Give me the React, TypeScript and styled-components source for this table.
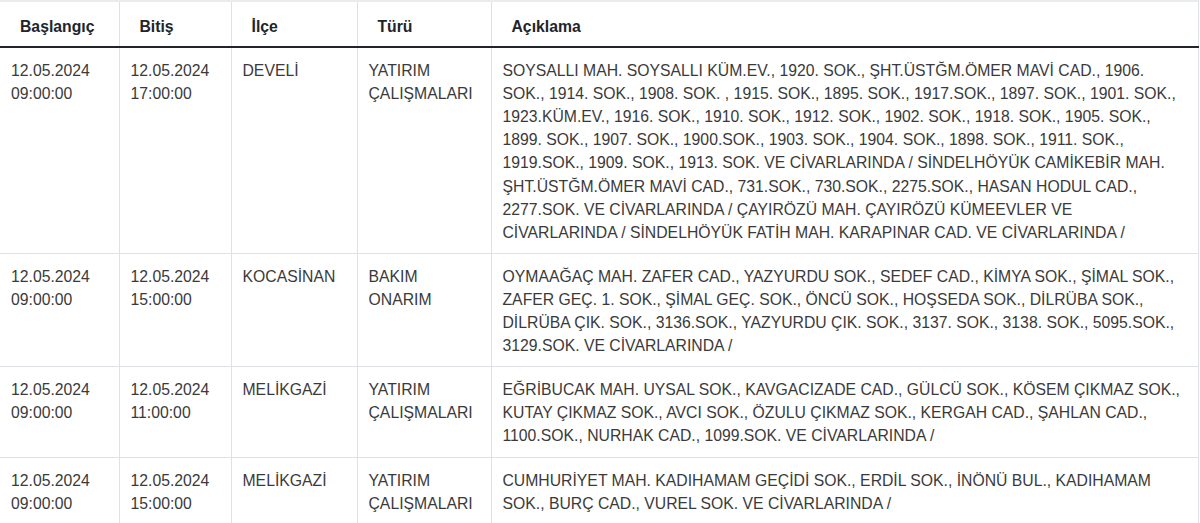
import styled, { createGlobalStyle } from 'styled-components';

// Planned outage list, one row per work order
type Outage = {
  start: string;
  end: string;
  district: string;
  kind: string;
  description: string;
};

const outages: Outage[] = [
  {
    start: '12.05.2024 09:00:00',
    end: '12.05.2024 17:00:00',
    district: 'DEVELİ',
    kind: 'YATIRIM ÇALIŞMALARI',
    description:
      'SOYSALLI MAH. SOYSALLI KÜM.EV., 1920. SOK., ŞHT.ÜSTĞM.ÖMER MAVİ CAD., 1906. SOK., 1914. SOK., 1908. SOK. , 1915. SOK., 1895. SOK., 1917.SOK., 1897. SOK., 1901. SOK., 1923.KÜM.EV., 1916. SOK., 1910. SOK., 1912. SOK., 1902. SOK., 1918. SOK., 1905. SOK., 1899. SOK., 1907. SOK., 1900.SOK., 1903. SOK., 1904. SOK., 1898. SOK., 1911. SOK., 1919.SOK., 1909. SOK., 1913. SOK. VE CİVARLARINDA / SİNDELHÖYÜK CAMİKEBİR MAH. ŞHT.ÜSTĞM.ÖMER MAVİ CAD., 731.SOK., 730.SOK., 2275.SOK., HASAN HODUL CAD., 2277.SOK. VE CİVARLARINDA / ÇAYIRÖZÜ MAH. ÇAYIRÖZÜ KÜMEEVLER VE CİVARLARINDA / SİNDELHÖYÜK FATİH MAH. KARAPINAR CAD. VE CİVARLARINDA /',
  },
  {
    start: '12.05.2024 09:00:00',
    end: '12.05.2024 15:00:00',
    district: 'KOCASİNAN',
    kind: 'BAKIM ONARIM',
    description:
      'OYMAAĞAÇ MAH. ZAFER CAD., YAZYURDU SOK., SEDEF CAD., KİMYA SOK., ŞİMAL SOK., ZAFER GEÇ. 1. SOK., ŞİMAL GEÇ. SOK., ÖNCÜ SOK., HOŞSEDA SOK., DİLRÜBA SOK., DİLRÜBA ÇIK. SOK., 3136.SOK., YAZYURDU ÇIK. SOK., 3137. SOK., 3138. SOK., 5095.SOK., 3129.SOK. VE CİVARLARINDA /',
  },
  {
    start: '12.05.2024 09:00:00',
    end: '12.05.2024 11:00:00',
    district: 'MELİKGAZİ',
    kind: 'YATIRIM ÇALIŞMALARI',
    description:
      'EĞRİBUCAK MAH. UYSAL SOK., KAVGACIZADE CAD., GÜLCÜ SOK., KÖSEM ÇIKMAZ SOK., KUTAY ÇIKMAZ SOK., AVCI SOK., ÖZULU ÇIKMAZ SOK., KERGAH CAD., ŞAHLAN CAD., 1100.SOK., NURHAK CAD., 1099.SOK. VE CİVARLARINDA /',
  },
  {
    start: '12.05.2024 09:00:00',
    end: '12.05.2024 15:00:00',
    district: 'MELİKGAZİ',
    kind: 'YATIRIM ÇALIŞMALARI',
    description:
      'CUMHURİYET MAH. KADIHAMAM GEÇİDİ SOK., ERDİL SOK., İNÖNÜ BUL., KADIHAMAM SOK., BURÇ CAD., VUREL SOK. VE CİVARLARINDA /',
  },
];

const columns = [
  { label: 'Başlangıç', width: 119 },
  { label: 'Bitiş', width: 112 },
  { label: 'İlçe', width: 126 },
  { label: 'Türü', width: 134 },
  { label: 'Açıklama', width: 707 },
];

const GlobalStyle = createGlobalStyle`
  html, body {
    margin: 0;
    padding: 0;
    background: #fff;
  }
  body {
    font-family: "Liberation Sans", Arial, sans-serif;
    color: #212529;
  }
`;

const Table = styled.table`
  width: 1198px;
  border-collapse: collapse;
  table-layout: fixed;
  border-right: 1px solid #dee2e6;
  font-size: 15.75px;
  line-height: 23.1px;
`;

const Col = styled.col<{ $width: number }>`
  width: ${(p) => p.$width}px;
`;

const HeadCell = styled.th`
  padding: 13px 12px 8px 20px;
  text-align: left;
  font-weight: 700;
  color: #212529;
  border-top: 2px solid #e9ecef;
  border-bottom: 2px solid #212529;
  border-left: 1px solid #dee2e6;
  &:first-child {
    border-left: none;
  }
`;

const Cell = styled.td`
  padding: 11px 10px 9px 11px;
  vertical-align: top;
  color: #3a3a3a;
  border-bottom: 1px solid #dee2e6;
  border-left: 1px solid #dee2e6;
  &:first-child {
    border-left: none;
  }
`;

const App = () => {
  return (
    <>
      <GlobalStyle />
      <Table>
        <colgroup>
          {columns.map((c) => (
            <Col key={c.label} $width={c.width} />
          ))}
        </colgroup>
        <thead>
          <tr>
            {columns.map((c) => (
              <HeadCell key={c.label}>{c.label}</HeadCell>
            ))}
          </tr>
        </thead>
        <tbody>
          {outages.map((o, i) => (
            <tr key={i}>
              <Cell>{o.start}</Cell>
              <Cell>{o.end}</Cell>
              <Cell>{o.district}</Cell>
              <Cell>{o.kind}</Cell>
              <Cell>{o.description}</Cell>
            </tr>
          ))}
        </tbody>
      </Table>
    </>
  );
};

export default App;
